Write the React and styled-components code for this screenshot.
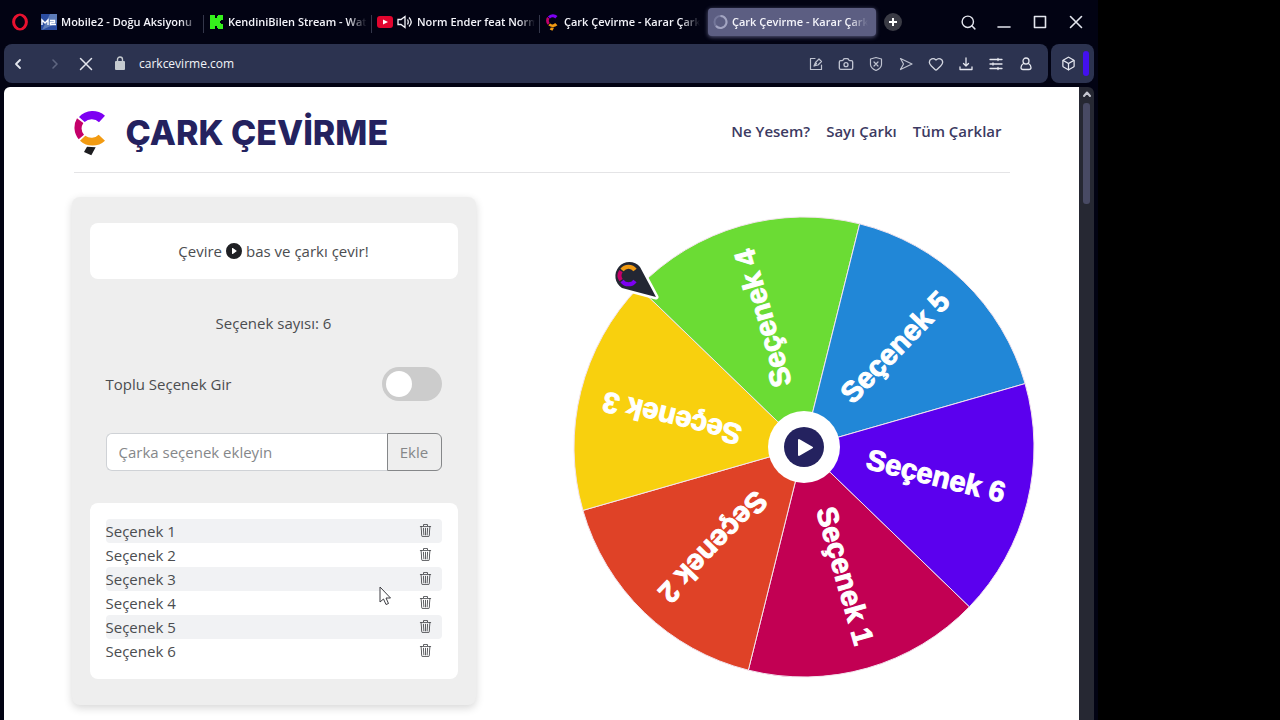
import { useState } from "react";
import styled, { createGlobalStyle } from "styled-components";
import { Box, Camera, Heart, Search } from "lucide-react";
import { BsPlayCircleFill, BsTrash3 } from "react-icons/bs";

const GlobalStyle = createGlobalStyle`
  * {
    box-sizing: border-box;
  }
  body {
    margin: 0;
    background: #000;
    font-family: "Open Sans", "Noto Sans", sans-serif;
    overflow: hidden;
  }
  button, input {
    font-family: inherit;
  }
`;

const Screen = styled.div`
  height: 100vh;
  padding-right: 182px;
`;

const Window = styled.div`
  height: 100%;
  display: flex;
  flex-direction: column;
  padding: 0 4px;
  background: #020313;
`;

const TabBar = styled.div`
  height: 44px;
  flex: none;
  display: flex;
  align-items: center;
`;

const IconButton = styled.button`
  width: ${(props) => props.$width || 30}px;
  height: 30px;
  flex: none;
  display: flex;
  align-items: center;
  justify-content: center;
  padding: 0;
  border: 0;
  background: none;
  color: ${(props) => props.$color || "#e4e6ee"};
`;

const Tabs = styled.div`
  display: flex;
  min-width: 0;
`;

const Tab = styled.button`
  flex: 0 1 168px;
  min-width: 0;
  width: 168px;
  height: 28px;
  display: flex;
  align-items: center;
  gap: 4px;
  padding: 0 8px 0 5px;
  border: 0;
  border-radius: ${(props) => (props.$active ? "4px" : "0")};
  background: ${(props) => (props.$active ? "#5c5e82" : "none")};
  box-shadow: ${(props) => (props.$active ? "0 1px 4px #5c5e82" : "none")};
  color: #f4f4fa;
  svg {
    flex: none;
  }
`;

const TabTitle = styled.span`
  flex: 1;
  min-width: 0;
  overflow: hidden;
  white-space: nowrap;
  text-align: left;
  font-size: 11px;
  font-weight: 600;
  line-height: 20px;
  mask-image: linear-gradient(to right, #000 86%, transparent);
`;

const Separator = styled.span`
  width: 1px;
  height: 18px;
  margin: 4px -8px 0 0;
  background: #34374a;
`;

const Spacer = styled.div`
  flex: 1;
`;

const ToolBar = styled.div`
  display: flex;
  flex: none;
  gap: 3px;
  height: 39px;
  margin-bottom: 4px;
`;

const AddressBar = styled.div`
  flex: 1;
  min-width: 0;
  display: flex;
  align-items: center;
  padding-right: 7px;
  border-radius: 8px;
  background: #2c3350;
`;

const Address = styled.input`
  flex: 1;
  min-width: 0;
  margin-left: -2px;
  padding: 0;
  border: 0;
  outline: 0;
  background: none;
  color: #f2f3f8;
  font-size: 12px;
  font-weight: 500;
  line-height: 20px;
`;

const SideBox = styled.div`
  width: 43px;
  display: flex;
  align-items: center;
  justify-content: space-between;
  padding: 0 5px 0 2px;
  border-radius: 8px;
  background: #2c3350;
`;

const Accent = styled.span`
  width: 6px;
  height: 25px;
  border-radius: 3px;
  background: #4310ee;
`;

const Viewport = styled.div`
  flex: 1;
  min-height: 0;
  display: flex;
`;

const Page = styled.div`
  flex: 1;
  min-width: 0;
  overflow: hidden;
  border-top-left-radius: 6px;
  background: #fff;
`;

const ScrollBar = styled.div`
  width: 15px;
  display: flex;
  flex-direction: column;
  align-items: center;
  border-top-right-radius: 6px;
  background: #262833;
`;

const Thumb = styled.div`
  width: 7px;
  height: 101px;
  border-radius: 3px;
  background: #484a64;
`;

const Container = styled.div`
  max-width: 960px;
  margin: 0 auto;
`;

const Header = styled.header`
  height: 86px;
  margin: 0 12px;
  display: flex;
  align-items: center;
  justify-content: space-between;
  border-bottom: 1px solid #e4e4e6;
`;

const Brand = styled.a`
  display: flex;
  align-items: center;
  gap: 17px;
  padding-top: 6px;
  color: #24225f;
  font-family: Inter, "Open Sans", sans-serif;
  font-size: 34px;
  font-weight: 800;
  line-height: 40px;
  text-decoration: none;
  white-space: nowrap;
`;

const Nav = styled.nav`
  display: flex;
  gap: 16px;
  padding: 2px 8px 0 0;
`;

const NavLink = styled.a`
  color: #3c3a62;
  font-size: 15px;
  font-weight: 600;
  line-height: 24px;
  text-decoration: none;
  white-space: nowrap;
`;

const Main = styled.main`
  display: flex;
  align-items: flex-start;
  justify-content: space-between;
  padding: 24px 0 24px 10px;
`;

const Panel = styled.section`
  flex: 0 1 404px;
  display: flex;
  flex-direction: column;
  gap: 32px;
  padding: 26px 18px;
  border-radius: 8px;
  background: #eee;
  box-shadow: 0 3px 8px rgba(0, 0, 0, 0.16);
  color: #4b4d50;
  font-size: 15px;
  line-height: 24px;
`;

const Card = styled.div`
  padding: 16px;
  border-radius: 8px;
  background: #fff;
`;

const Hint = styled(Card)`
  display: flex;
  align-items: center;
  justify-content: center;
  gap: 4px;
  svg {
    color: #1f2024;
  }
`;

const Count = styled.div`
  text-align: center;
`;

const Row = styled.div`
  display: flex;
  align-items: center;
  justify-content: space-between;
  padding: 0 16px;
`;

const Switch = styled.input`
  appearance: none;
  width: 60px;
  height: 34px;
  display: flex;
  align-items: center;
  justify-content: ${(props) => (props.checked ? "flex-end" : "flex-start")};
  margin: 0;
  padding: 4px;
  border-radius: 17px;
  background: ${(props) => (props.checked ? "#24225f" : "#ccc")};
  &::before {
    content: "";
    width: 26px;
    height: 26px;
    border-radius: 50%;
    background: #fff;
  }
`;

const OptionInput = styled.input`
  flex: 1;
  min-width: 0;
  height: 38px;
  padding: 0 12px;
  border: 1px solid #cfd2d6;
  border-right: 0;
  border-radius: 6px 0 0 6px;
  outline: 0;
  background: #fff;
  color: #212529;
  font-size: 15px;
  &::placeholder {
    color: #85878a;
    opacity: 1;
  }
`;

const AddButton = styled.button`
  width: 55px;
  height: 38px;
  padding: 0;
  border: 1px solid #858789;
  border-radius: 0 6px 6px 0;
  background: #eee;
  color: #858789;
  font-size: 15px;
`;

const OptionCard = styled(Card)`
  position: relative;
`;

const OptionList = styled.ul`
  margin: 0;
  padding: 0;
  list-style: none;
`;

const OptionItem = styled.li`
  height: 24px;
  display: flex;
  align-items: center;
  justify-content: space-between;
  padding-right: 10px;
  border-radius: 4px;
  &:nth-child(odd) {
    background: #f1f2f4;
  }
`;

const DeleteButton = styled.button`
  display: flex;
  padding: 0 0 2px;
  border: 0;
  background: none;
  color: #3c3e42;
`;

const Cursor = styled.svg`
  position: absolute;
  top: 83px;
  left: 289px;
`;

const WheelBox = styled.div`
  position: relative;
  flex: 0 1 464px;
  margin: 18px -14px 0 24px;
  svg {
    display: block;
  }
`;

const SpinButton = styled.button`
  position: absolute;
  top: 50%;
  left: 50%;
  width: 72px;
  height: 72px;
  transform: translate(-50%, -50%);
  padding: 16px;
  border: 0;
  border-radius: 50%;
  background: #fff;
`;

const WheelText = styled.text`
  font-family: "Liberation Sans", Arial, sans-serif;
  font-size: 29px;
  font-weight: 700;
  fill: #fff;
  stroke: #fff;
`;

const options = [
  { name: "Seçenek 1", color: "#c20053" },
  { name: "Seçenek 2", color: "#df4227" },
  { name: "Seçenek 3", color: "#f8d00e" },
  { name: "Seçenek 4", color: "#6bdc34" },
  { name: "Seçenek 5", color: "#2187d7" },
  { name: "Seçenek 6", color: "#5b00ee" },
];

const Logo = ({ width, height, tail = "#1d1d20" }) => (
  <svg width={width} height={height} viewBox="46 46 105 138" aria-hidden="true">
    <path fill="#7d00f2" d="M61 67A55 55 0 0 1 139 63L121 83A30 30 0 0 0 78 82Z" />
    <path fill="#c4006a" d="M55 71A55 55 0 0 0 60 134L76 120A30 30 0 0 1 74 85Z" />
    <path fill="#f29b12" d="M64 138A55 55 0 0 0 139 138L120 120A30 30 0 0 1 80 123Z" />
    <path fill={tail} d="M85 156L111 158L98 182L76 172Z" />
  </svg>
);

const OperaIcon = () => (
  <svg width="18" height="18" viewBox="0 0 18 18">
    <ellipse cx="9" cy="9" rx="6.4" ry="7" fill="none" stroke="#e8112f" strokeWidth="3" />
    <ellipse cx="9" cy="9" rx="3.6" ry="6.2" fill="#020313" />
  </svg>
);

const Mobile2Icon = () => (
  <svg width="16" height="16" viewBox="0 0 16 16">
    <rect width="16" height="16" fill="#2b4da0" />
    <path d="M16 0L9 0L1 16L16 9Z" fill="#5d7cb8" />
    <path d="M1 11V6L4 9L7 6V11M9 6.500H13.500V8.500H9.500V10.500H15" fill="none" stroke="#fff" strokeWidth="1.4" />
  </svg>
);

const KickIcon = () => (
  <svg width="15" height="14" viewBox="0 0 15 14">
    <path fill="#35f11c" d="M1 0H6V3H8V1H9V0H14V5H12V6H11V8H12V9H14V14H9V13H8V11H6V14H1Z" />
  </svg>
);

const YoutubeIcon = () => (
  <svg width="16" height="12" viewBox="0 0 16 12">
    <rect width="16" height="12" rx="3" fill="#e1052e" />
    <path d="M6 3.500L11 6L6 8.500Z" fill="#fff" />
  </svg>
);

const SpeakerIcon = () => (
  <svg width="16" height="14" viewBox="0 0 16 14" fill="none" stroke="#f4f4fa" strokeWidth="1.3">
    <path d="M1 4.500H4L8 1.500V12.500L4 9.500H1Z" />
    <path d="M10.500 4.500Q12 7 10.500 9.500M12 2.500Q16.500 7 12 11.500" />
  </svg>
);

const SpinnerIcon = () => (
  <svg width="15" height="16" viewBox="0 0 15 16" fill="none" strokeWidth="2">
    <circle cx="7.500" cy="8" r="6" stroke="#74779a" />
    <path d="M7.500 2A6 6 0 1 1 3 12" stroke="#a3a5c2" />
  </svg>
);

const LineIcon = ({ size = 16, width = 1.2, children }) => (
  <svg
    width={size}
    height={size}
    viewBox="0 0 16 16"
    fill="none"
    stroke="currentColor"
    strokeWidth={width}
    strokeLinecap="round"
    strokeLinejoin="round"
  >
    {children}
  </svg>
);

const tabs = [
  { title: "Mobile2 - Doğu Aksiyonu", icon: <Mobile2Icon /> },
  { title: "KendiniBilen Stream - Wat", icon: <KickIcon /> },
  { title: "Norm Ender feat Norm", icon: <><YoutubeIcon /><SpeakerIcon /></> },
  { title: "Çark Çevirme - Karar Çark", icon: <Logo width={15} height={17} tail="#f29b12" /> },
  { title: "Çark Çevirme - Karar Çark", icon: <SpinnerIcon />, active: true },
];

const RADIUS = 230;
const STEP = 360 / options.length;
// middle of the first slice, clockwise from three o'clock
const START = 74;

const point = (deg) => {
  const rad = (deg * Math.PI) / 180;
  return `${RADIUS * Math.cos(rad)} ${RADIUS * Math.sin(rad)}`;
};

const Wheel = () => (
  <WheelBox>
    <svg width="100%" viewBox="-232 -232 464 464">
      {options.map((option, i) => {
        const mid = START + i * STEP;
        return (
          <g key={option.name}>
            <path
              d={`M0 0L${point(mid - STEP / 2)}A${RADIUS} ${RADIUS} 0 0 1 ${point(mid + STEP / 2)}Z`}
              fill={option.color}
              stroke="#f3e4ee"
              strokeWidth="1"
            />
            <WheelText x="206" y="6" textAnchor="end" transform={`rotate(${mid})`}>
              {option.name}
            </WheelText>
          </g>
        );
      })}
      <path
        d="M-148 -150L-182 -159A14 14 0 1 1 -164 -180Z"
        fill="#232733"
        stroke="#fff"
        strokeWidth="5"
        strokeLinejoin="round"
        paintOrder="stroke"
      />
      <g fill="none" strokeWidth="4">
        <path d="M-182 -177A8 8 0 0 1 -169 -177" stroke="#f29b12" />
        <path d="M-183 -176A8 8 0 0 0 -183 -167" stroke="#c4006a" />
        <path d="M-182 -166A8 8 0 0 0 -169 -166" stroke="#7d00f2" />
      </g>
    </svg>
    <SpinButton aria-label="Çevir">
      <svg width="40" height="40" viewBox="0 0 40 40">
        <circle cx="20" cy="20" r="20" fill="#24225f" />
        <path
          d="M15 13V28L28 20.500Z"
          fill="#fff"
          stroke="#fff"
          strokeWidth="2"
          strokeLinejoin="round"
        />
      </svg>
    </SpinButton>
  </WheelBox>
);

const Browser = ({ children }) => (
  <Window>
    <TabBar>
      <IconButton $width={32} aria-label="Opera"><OperaIcon /></IconButton>
      <Tabs>
        {tabs.map((tab, i) => (
          <Tab key={i} $active={tab.active}>
            {tab.icon}
            <TabTitle>{tab.title}</TabTitle>
            {i < 3 && <Separator />}
          </Tab>
        ))}
      </Tabs>
      <IconButton $width={34} aria-label="Yeni sekme">
        <svg width="18" height="18" viewBox="0 0 18 18">
          <circle cx="9" cy="9" r="9" fill="#3a3b45" />
          <path d="M9 5V13M5 9H13" stroke="#fff" strokeWidth="2" />
        </svg>
      </IconButton>
      <Spacer />
      <IconButton $width={36} aria-label="Ara"><Search size={17} strokeWidth={2} /></IconButton>
      <IconButton $width={36} aria-label="Küçült">
        <LineIcon width={1.6}><path d="M2 13H14" /></LineIcon>
      </IconButton>
      <IconButton $width={36} aria-label="Büyüt">
        <LineIcon width={1.6}><path d="M2.500 2.500H13.500V13.500H2.500Z" /></LineIcon>
      </IconButton>
      <IconButton $width={36} aria-label="Kapat">
        <LineIcon width={1.6}><path d="M2.500 2.500L13.500 13.500M13.500 2.500L2.500 13.500" /></LineIcon>
      </IconButton>
    </TabBar>
    <ToolBar>
      <AddressBar>
        <IconButton aria-label="Geri">
          <LineIcon width={1.8}><path d="M9 4L5 8L9 12" /></LineIcon>
        </IconButton>
        <IconButton $width={40} $color="#5f6680" aria-label="İleri">
          <LineIcon width={1.6}><path d="M7 4L11 8L7 12" /></LineIcon>
        </IconButton>
        <IconButton $width={24} aria-label="Durdur">
          <LineIcon width={1.5}><path d="M2.500 2.500L13.500 13.500M13.500 2.500L2.500 13.500" /></LineIcon>
        </IconButton>
        <IconButton $width={43} $color="#c6cbcf" aria-label="Site bilgisi">
          <svg width="12" height="15" viewBox="0 0 12 15">
            <rect x="1" y="5" width="10" height="9" rx="1" fill="currentColor" />
            <path d="M3.500 6V3.500A2.500 2.500 0 0 1 8.500 3.500V6" fill="none" stroke="currentColor" strokeWidth="1.4" />
          </svg>
        </IconButton>
        <Address aria-label="Adres" defaultValue="carkcevirme.com" />
        <IconButton $color="#bfc3d0" aria-label="Not">
          <LineIcon>
            <path d="M7 2.500H2.500V13.500H13.500V9M6 10L7.500 6.500L11 3L13.500 5.500L10 9ZM6 10L8.500 7.500" />
          </LineIcon>
        </IconButton>
        <IconButton $color="#bfc3d0" aria-label="Görüntü al"><Camera size={16} strokeWidth={2} /></IconButton>
        <IconButton $color="#bfc3d0" aria-label="Engelleyici">
          <LineIcon>
            <path d="M8 1.500L13.500 3V8.500Q13.500 12 8 14.500Q2.500 12 2.500 8.500V3ZM6 6L10 10M10 6L6 10" />
          </LineIcon>
        </IconButton>
        <IconButton $color="#bfc3d0" aria-label="Gönder">
          <LineIcon><path d="M2.500 2.500L14 8L2.500 13.500L5.500 8Z" /></LineIcon>
        </IconButton>
        <IconButton $color="#d2d5df" aria-label="Favoriler"><Heart size={16} strokeWidth={2} /></IconButton>
        <IconButton aria-label="İndirilenler">
          <LineIcon width={1.3}><path d="M8 2V10M5.500 7.500L8 10L10.500 7.500M2 11V13.500H14V11" /></LineIcon>
        </IconButton>
        <IconButton aria-label="Ayarlar">
          <LineIcon width={1.3}><path d="M2 3.500H14M2 8H14M2 12.500H14M10 2.500V4.500M5 7V9M10 11.500V13.500" /></LineIcon>
        </IconButton>
        <IconButton aria-label="Profil">
          <LineIcon width={1.3}>
            <circle cx="8" cy="5" r="3" />
            <path d="M5.500 7.500Q3 9 3 11.500Q3 13.500 5 13.500H11Q13 13.500 13 11.500Q13 9 10.500 7.500" />
          </LineIcon>
        </IconButton>
      </AddressBar>
      <SideBox>
        <IconButton aria-label="Uzantılar"><Box size={15} strokeWidth={2} /></IconButton>
        <Accent />
      </SideBox>
    </ToolBar>
    <Viewport>
      {children}
      <ScrollBar>
        <LineIcon width={2}><path d="M5 9L8 5.500L11 9" stroke="#c6c7d0" /></LineIcon>
        <Thumb />
      </ScrollBar>
    </Viewport>
  </Window>
);

const App = () => {
  const [bulk, setBulk] = useState(false);
  return (
    <Screen>
      <GlobalStyle />
      <Browser>
        <Page>
          <Container>
            <Header>
              <Brand href="#">
                <Logo width={35} height={46} />
                ÇARK ÇEVİRME
              </Brand>
              <Nav>
                <NavLink href="#ne-yesem">Ne Yesem?</NavLink>
                <NavLink href="#sayi-carki">Sayı Çarkı</NavLink>
                <NavLink href="#tum-carklar">Tüm Çarklar</NavLink>
              </Nav>
            </Header>
            <Main>
              <Panel>
                <Hint>
                  <span>Çevire</span>
                  <BsPlayCircleFill size={16} />
                  <span>bas ve çarkı çevir!</span>
                </Hint>
                <Count>Seçenek sayısı: {options.length}</Count>
                <Row>
                  <label htmlFor="bulk">Toplu Seçenek Gir</label>
                  <Switch
                    id="bulk"
                    type="checkbox"
                    checked={bulk}
                    onChange={(e) => setBulk(e.target.checked)}
                  />
                </Row>
                <Row>
                  <OptionInput aria-label="Seçenek" placeholder="Çarka seçenek ekleyin" />
                  <AddButton>Ekle</AddButton>
                </Row>
                <OptionCard>
                  <OptionList>
                    {options.map((option) => (
                      <OptionItem key={option.name}>
                        {option.name}
                        <DeleteButton aria-label={`${option.name} sil`}>
                          <BsTrash3 size={13} />
                        </DeleteButton>
                      </OptionItem>
                    ))}
                  </OptionList>
                  <Cursor width="13" height="20" viewBox="0 0 13 20">
                    <path
                      d="M1 1V16L4.500 13L7 18.500L9.500 17.500L7 12H11.500Z"
                      fill="#fff"
                      stroke="#3c3d42"
                    />
                  </Cursor>
                </OptionCard>
              </Panel>
              <Wheel />
            </Main>
          </Container>
        </Page>
      </Browser>
    </Screen>
  );
};

export default App;
